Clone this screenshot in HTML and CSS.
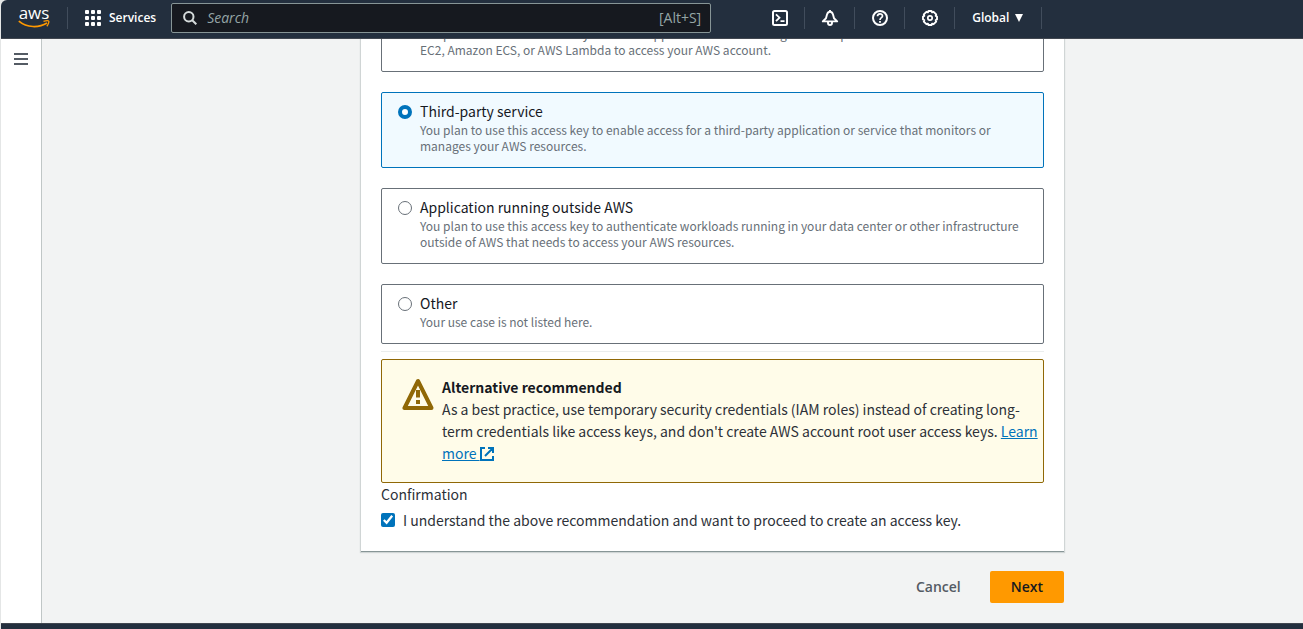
FILE: index.html
```html
<!DOCTYPE html>
<html lang="en">
<head>
<meta charset="utf-8">
<title>Create access key</title>
<link rel="stylesheet" href="styles.css">
</head>
<body class="app">
<header class="topbar">
  <a class="logo" href="#" aria-label="AWS home">
    <span class="logo-word">aws</span>
    <svg class="logo-smile" width="32" height="8" viewBox="0 0 32 8" fill="none" stroke="#f90"><path d="M.8 1.200C9 8 21 8 29 3" stroke-width="1.700"/><path d="M25.500 1.300c3-.8 5-.6 5.300 0s-.5 3.300-2 5" stroke-width="1.300"/></svg>
  </a>
  <button class="services" type="button">
    <svg width="16" height="16" viewBox="0 0 16 16" fill="#fff"><rect width="4" height="4" rx="1"/><rect x="6" width="4" height="4" rx="1"/><rect x="12" width="4" height="4" rx="1"/><rect y="6" width="4" height="4" rx="1"/><rect x="6" y="6" width="4" height="4" rx="1"/><rect x="12" y="6" width="4" height="4" rx="1"/><rect y="12" width="4" height="4" rx="1"/><rect x="6" y="12" width="4" height="4" rx="1"/><rect x="12" y="12" width="4" height="4" rx="1"/></svg>
    Services
  </button>
  <label class="search">
    <svg width="14" height="14" viewBox="0 0 14 14" fill="none" stroke="#d5dbdb" stroke-width="2"><circle cx="5.800" cy="5.800" r="4.700"/><path d="M9 9l4.300 4.300"/></svg>
    <input class="search-input" type="text" placeholder="Search" aria-label="Search">
    <span class="shortcut">[Alt+S]</span>
  </label>
  <nav class="tools">
    <button class="tool" type="button" aria-label="CloudShell"><svg width="18" height="18" viewBox="0 0 18 18" fill="none" stroke="#fff" stroke-width="2"><rect x="2" y="2" width="14" height="14" rx="1.500"/><path d="M5 5.300L8.500 8.700 5 12.100M9.500 12.200h4" stroke-width="1.800"/></svg></button>
    <button class="tool" type="button" aria-label="Notifications"><svg width="18" height="18" viewBox="0 0 18 18" fill="none" stroke="#fff" stroke-width="1.900" stroke-linejoin="round"><path d="M1.800 12.400L5 9.300 6 5.500Q7 2.800 9 2.800T12 5.500L13 9.300l3.200 3.100zM9 1v2"/><path d="M7 13v1a2 2 0 0 0 4 0v-1"/></svg></button>
    <button class="tool" type="button" aria-label="Help"><svg width="18" height="18" viewBox="0 0 18 18" fill="none" stroke="#fff" stroke-width="2"><circle cx="9" cy="9" r="7"/><path d="M6.500 7.300C6.500 4 11.500 4 11.500 7 11.500 8.800 9 8.600 9 11" stroke-width="1.700"/><path d="M9 12v1.800" stroke-width="1.800"/></svg></button>
    <button class="tool" type="button" aria-label="Settings"><svg width="18" height="18" viewBox="0 0 18 18" fill="none" stroke="#fff" stroke-width="1.900" stroke-linejoin="round"><path d="M7.500 2h3l.6 1.300 1.500-.5 2.600 2.600-.5 1.500L16 7.500v3l-1.300.6.5 1.500-2.600 2.600-1.500-.5-.6 1.300h-3l-.6-1.300-1.500.5-2.600-2.600.5-1.500L2 10.500v-3l1.300-.6-.5-1.500 2.600-2.600 1.500.5z"/><circle cx="9" cy="9" r="2.200" stroke-width="1.700"/></svg></button>
    <button class="region" type="button">Global <svg width="8" height="8" viewBox="0 0 8 8" fill="#fff"><path d="M0 0h8L4 8z"/></svg></button>
  </nav>
</header>

<div class="shell">
  <aside class="rail">
    <button class="menu" type="button" aria-label="Open navigation"><svg width="14" height="12" viewBox="0 0 14 12" fill="#545b64"><path d="M0 0h14v2H0zM0 5h14v2H0zM0 10h14v2H0z"/></svg></button>
  </aside>
  <main class="page">
    <form class="wizard">
      <section class="card">
        <div class="options">
          <label class="option">
            <input class="radio" type="radio" name="usecase">
            <span class="option-text"><span class="option-title">Application running on an AWS compute service</span>
            <span class="option-desc">You plan to use this access key to enable application code running on a compute service like Amazon <br>EC2, Amazon ECS, or AWS Lambda to access your AWS account.</span></span>
          </label>
          <label class="option">
            <input class="radio" type="radio" name="usecase" checked>
            <span class="option-text"><span class="option-title">Third-party service</span>
            <span class="option-desc">You plan to use this access key to enable access for a third-party application or service that monitors or manages your AWS resources.</span></span>
          </label>
          <label class="option">
            <input class="radio" type="radio" name="usecase">
            <span class="option-text"><span class="option-title">Application running outside AWS</span>
            <span class="option-desc">You plan to use this access key to authenticate workloads running in your data center or other infrastructure outside of AWS that needs to access your AWS resources.</span></span>
          </label>
          <label class="option">
            <input class="radio" type="radio" name="usecase">
            <span class="option-text"><span class="option-title">Other</span>
            <span class="option-desc">Your use case is not listed here.</span></span>
          </label>
        </div>
        <hr class="divider">
        <div class="alert">
          <svg class="alert-icon" width="32" height="32" viewBox="0 0 32 32" fill="none" stroke="#906806" stroke-width="4" stroke-linejoin="round"><path d="M16 3L2.500 30h27z"/><path d="M16 12v7.500M16 22v4"/></svg>
          <div class="alert-body">
            <strong class="alert-title">Alternative recommended</strong>
            <p class="alert-text">As a best practice, use temporary security credentials (IAM roles) instead of creating long-term credentials like access keys, and don't create AWS account root user access keys. <a class="link" href="#">Learn more <svg class="external" width="14" height="14" viewBox="0 0 14 14" fill="none" stroke="#0073bb" stroke-width="2"><path d="M5 1H1v12h12V9M8 1h5v5M13 1L5 9"/></svg></a></p>
          </div>
        </div>
        <p class="confirm-label">Confirmation</p>
        <label class="confirm"><input class="check" type="checkbox" checked>I understand the above recommendation and want to proceed to create an access key.</label>
      </section>
      <div class="actions">
        <button class="btn" type="button">Cancel</button>
        <button class="btn btn-primary" type="submit">Next</button>
      </div>
    </form>
  </main>
</div>
<footer class="footer"></footer>
</body>
</html>
```
FILE: styles.css
```css
* { box-sizing: border-box; }
html { background: #e4e6e6; }
.app {
  margin: 0;
  height: 100vh;
  display: flex;
  flex-direction: column;
  overflow: hidden;
  border-left: 1px solid #e4e6e6;
  font: 14px/22px "Noto Sans CJK SC", "Open Sans", sans-serif;
  color: #16191f;
}
button { border: 0; padding: 0; background: none; font: inherit; cursor: pointer; }
svg { display: block; flex: none; }
p { margin: 0; }

.topbar {
  flex: none;
  display: flex;
  align-items: center;
  height: 39px;
  padding-bottom: 2px;
  background: #232f3e;
  border-bottom: 1px solid #414750;
  border-top-left-radius: 6px;
  color: #fff;
  font-family: "Open Sans", sans-serif;
}
.logo {
  display: flex;
  flex-direction: column;
  align-items: center;
  width: 66px;
  padding-bottom: 2px;
  color: #fff;
  text-decoration: none;
  font: 500 17px/14px "Open Sans", sans-serif;
}
.services {
  display: flex;
  align-items: center;
  gap: 8px;
  height: 22px;
  padding: 0 15px 0 17px;
  border-left: 1px solid #414d5c;
  color: #fff;
  font-size: 12px;
  font-weight: 600;
}
.search {
  display: flex;
  align-items: center;
  gap: 10px;
  flex: 0 1 540px;
  height: 30px;
  padding: 0 9px 0 11px;
  background: #16191f;
  border: 1px solid #879596;
  border-radius: 2px;
}
.search-input {
  flex: 1;
  min-width: 0;
  padding: 0;
  border: 0;
  outline: 0;
  background: none;
  color: #fff;
  font: inherit;
}
.search-input::placeholder { color: #95a5a6; font-style: italic; opacity: 1; }
.shortcut { color: #95a5a6; }
.tools { display: flex; align-items: center; margin-left: 44px; }
.tool {
  display: flex;
  align-items: center;
  justify-content: center;
  width: 50px;
  height: 22px;
  border-right: 1px solid #414d5c;
}
.region {
  display: flex;
  align-items: center;
  gap: 6px;
  height: 22px;
  padding: 0 18px 0 17px;
  border-right: 1px solid #414d5c;
  color: #fff;
  font-size: 12px;
  font-weight: 600;
}

.shell { flex: 1; min-height: 0; display: flex; }
.rail {
  flex: none;
  width: 41px;
  padding: 14px 13px;
  background: #fff;
  border-right: 1px solid #c0c6c6;
}
.menu { display: block; }
.page {
  flex: 1;
  min-width: 0;
  display: flex;
  flex-direction: column;
  justify-content: flex-end;
  overflow: hidden;
  padding: 0 239px 20px 319px;
  background: #f2f3f3;
}
.card {
  padding: 20px;
  background: #fff;
  border-bottom: 1px solid #879596;
  box-shadow: 0 0 1px 1px #d0d5d5;
}
.options { display: flex; flex-direction: column; gap: 20px; }
.option {
  display: flex;
  gap: 8px;
  min-height: 60px;
  padding: 7px 16px 13px;
  border: 1px solid #687078;
  border-radius: 2px;
}
.option:has(.radio:checked) { background: #f1faff; border-color: #0073bb; }
.radio {
  flex: none;
  appearance: none;
  width: 14px;
  height: 14px;
  margin: 5px 0 0;
  background: #fff;
  border: 1px solid #687078;
  border-radius: 50%;
}
.radio:checked { border: 4px solid #0073bb; }
.option-title { display: block; }
.option-desc { display: block; color: #687078; font-size: 12px; line-height: 16px; }
.divider { margin: 7px 0; border: 0; border-top: 1px solid #eaeded; }
.alert {
  display: flex;
  gap: 8px;
  padding: 16px 2px 18px 19px;
  background: #fffce9;
  border: 1px solid #906806;
  border-radius: 2px;
}
.alert-icon { margin: 2px 0 0 1px; }
.alert-title { display: block; font-weight: 700; }
.alert-text { color: #2d3138; }
.link { color: #0073bb; }
.external { display: inline-block; vertical-align: -2px; }
.confirm-label { color: #2d3138; }
.confirm { display: flex; align-items: center; gap: 8px; margin-top: 4px; color: #2d3138; }
.check { flex: none; width: 14px; height: 14px; margin: 0; accent-color: #0073bb; }
.actions { display: flex; justify-content: flex-end; gap: 8px; margin-top: 19px; }
.btn { height: 32px; padding: 0 21px; border-radius: 2px; color: #545b64; font-family: "Open Sans", sans-serif; font-weight: 600; }
.btn-primary { background: #f90; color: #16191f; }
.footer { flex: none; height: 6px; background: #232f3e; border-top: 1px solid #414750; }
```
